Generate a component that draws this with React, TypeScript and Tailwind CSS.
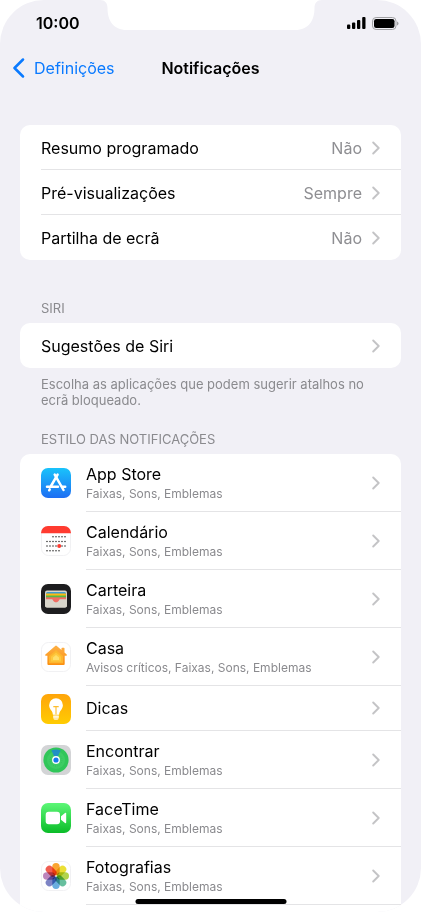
import React from 'react';

interface SettingItem {
  label: string;
  value?: string;
}

interface AppItem {
  name: string;
  styles?: string;
  icon: React.ReactNode;
}

const AppStoreIcon = () => (
  <svg viewBox="0 0 30 30" className="size-[30px]" aria-hidden="true">
    <defs>
      <linearGradient id="store" x1="0" y1="0" x2="0" y2="1">
        <stop offset="0" stopColor="#19C3FB" />
        <stop offset="1" stopColor="#1E6EF3" />
      </linearGradient>
    </defs>
    <rect width="30" height="30" rx="7" fill="url(#store)" />
    <g stroke="#fff" strokeWidth="2.5" strokeLinecap="round" fill="none">
      <path d="M16.6 6.6 10 18" />
      <path d="M13.700 6.600 22.500 22" />
      <path d="M6 18.800H17" />
      <path d="M21 18.800H24.200" />
      <path d="M8.700 21.400 8.200 22.300" />
    </g>
  </svg>
);

const calendarDots = [
  { y: 10.8, cols: [12, 15, 18, 21, 24] },
  { y: 15.5, cols: [6, 9, 12, 15, 18, 21, 24] },
  { y: 20, cols: [6, 9, 12, 15, 21, 24] },
  { y: 24.7, cols: [6, 9, 12, 15, 18] },
];

const CalendarIcon = () => (
  <svg viewBox="0 0 30 30" className="size-[30px]" aria-hidden="true">
    <rect x="0.5" y="0.5" width="29" height="29" rx="7" fill="#fff" stroke="#F1F1F3" />
    <path d="M0 7.2V7a7 7 0 0 1 7-7h16a7 7 0 0 1 7 7v.2Z" fill="#FF3B30" />
    {calendarDots.map((row) =>
      row.cols.map((x) => <circle key={`${x}-${row.y}`} cx={x} cy={row.y} r="0.7" fill="#111" />)
    )}
    <circle cx="18.2" cy="20" r="2" fill="#FF3B30" />
  </svg>
);

const WalletIcon = () => (
  <svg viewBox="0 0 30 30" className="size-[30px]" aria-hidden="true">
    <rect width="30" height="30" rx="7" fill="#1D1D1F" />
    <rect x="4" y="6.5" width="22" height="17" rx="2" fill="#D8D5CB" />
    <path d="M5 9.5A1.500 1.500 0 0 1 6.500 8h17A1.500 1.500 0 0 1 25 9.500V11H5Z" fill="#3D9BD0" />
    <path d="M5 9.500h20V12H5Z" fill="#FDB913" />
    <path d="M5 11.500h20V14H5Z" fill="#54B948" />
    <path d="M5 13.300h20v4H5Z" fill="#F16D63" />
    <path d="M12 15h6v1.500a3 3 0 0 1-6 0Z" fill="#F16D63" />
    <path d="M4 15.200h6.400c1 0 1.300.5 1.700 1.200.6 1.100 1.600 1.900 2.900 1.900s2.300-.8 2.900-1.900c.4-.7.7-1.200 1.700-1.200H26V21.500a2 2 0 0 1-2 2H6a2 2 0 0 1-2-2Z" fill="#D8D5CB" />
  </svg>
);

const HomeIcon = () => (
  <svg viewBox="0 0 30 30" className="size-[30px]" aria-hidden="true">
    <defs>
      <linearGradient id="home" x1="0" y1="0" x2="0" y2="1">
        <stop offset="0" stopColor="#FDB045" />
        <stop offset="1" stopColor="#FB8F10" />
      </linearGradient>
    </defs>
    <rect x="0.5" y="0.5" width="29" height="29" rx="7" fill="#fff" stroke="#F1F1F3" />
    <path d="M14.200 3.900a1.200 1.200 0 0 1 1.600 0l4.700 4V6.300q0-.6.600-.6h1.800q.6 0 .6.600v4.300l2.200 1.900c.5.500.2 1.200-.4 1.200h-1.600v8.200q0 1-1 1H7.400q-1 0-1-1v-8.200H4.800c-.7 0-1-.7-.4-1.200Z" fill="url(#home)" />
    <path d="m15 8 7 6v7.300H8V14Z" fill="#FDB62F" />
    <path d="m15 10.500 5 4.200v4.800H10v-4.800Z" fill="#FEC93F" />
    <path d="m15 13 3 2.500V18h-6v-2.500Z" fill="#FFDF6B" />
  </svg>
);

const TipsIcon = () => (
  <svg viewBox="0 0 30 30" className="size-[30px]" aria-hidden="true">
    <defs>
      <linearGradient id="tips" x1="0" y1="0" x2="0" y2="1">
        <stop offset="0" stopColor="#FFA50A" />
        <stop offset="1" stopColor="#FFCC02" />
      </linearGradient>
    </defs>
    <rect width="30" height="30" rx="7" fill="url(#tips)" />
    <path d="M15 4.300a6.900 6.900 0 0 0-6.900 6.900c0 2.700 1.500 4.200 2.600 5.900.8 1.200 1 2.300 1.200 3.600h6.200c.2-1.300.4-2.400 1.200-3.600 1.100-1.700 2.600-3.200 2.600-5.900A6.900 6.900 0 0 0 15 4.300Z" fill="#fff" />
    <path d="M12.200 21.200h5.600v1.700q0 3.200-2.800 3.200t-2.800-3.200Z" fill="#FFE9A8" />
    <path d="M12.200 22.900h5.600" stroke="#fff" strokeWidth="1" />
    <path d="M12.300 12.600h5.400M15 12.600v7.800" stroke="#FDBD2C" strokeWidth="1.100" fill="none" />
  </svg>
);

const FindMyIcon = () => (
  <svg viewBox="0 0 30 30" className="size-[30px]" aria-hidden="true">
    <rect width="30" height="30" rx="7" fill="#D3D4D6" />
    <circle cx="15" cy="15" r="12.600" fill="#30C659" />
    <circle cx="15" cy="15" r="9" fill="#3DCC64" />
    <circle cx="15" cy="15" r="6" fill="none" stroke="#2BB351" strokeWidth="0.700" strokeDasharray="0.700 1.600" />
    <path d="M15 15 10.400 5.500a11 11 0 0 1 9.200 0Z" fill="#1C86D6" opacity="0.850" />
    <circle cx="15" cy="15" r="3.900" fill="#fff" />
    <circle cx="15" cy="15" r="2.600" fill="#1478F0" />
  </svg>
);

const FaceTimeIcon = () => (
  <svg viewBox="0 0 30 30" className="size-[30px]" aria-hidden="true">
    <defs>
      <linearGradient id="facetime" x1="0" y1="0" x2="0" y2="1">
        <stop offset="0" stopColor="#5DF777" />
        <stop offset="1" stopColor="#0ABC28" />
      </linearGradient>
    </defs>
    <rect width="30" height="30" rx="7" fill="url(#facetime)" />
    <rect x="4.700" y="8.700" width="14.300" height="12.600" rx="3" fill="#fff" />
    <path d="M20 13.200 24 9.900c.5-.4 1.200-.1 1.200.6v9c0 .7-.7 1-1.200.6l-4-3.300Z" fill="#fff" />
  </svg>
);

const petals = ['#F99B1C', '#E9DC1F', '#A9CF38', '#57B894', '#5AA5DB', '#6F77BF', '#B678B5', '#EE4B3E'];

const PhotosIcon = () => (
  <svg viewBox="0 0 30 30" className="size-[30px]" aria-hidden="true">
    <rect x="0.5" y="0.5" width="29" height="29" rx="7" fill="#fff" stroke="#F1F1F3" />
    <g className="isolate">
      {petals.map((color, i) => (
        <rect
          key={color}
          x="11.300"
          y="2"
          width="7.400"
          height="12.200"
          rx="3.700"
          fill={color}
          fillOpacity="0.900"
          className="mix-blend-multiply"
          transform={`rotate(${i * 45} 15 15)`}
        />
      ))}
    </g>
  </svg>
);

const Chevron = () => (
  <svg viewBox="0 0 8 14" className="h-[14px] w-2 shrink-0" fill="none" aria-hidden="true">
    <path d="M1.200 1.500 6.700 7l-5.500 5.500" stroke="#C4C4C6" strokeWidth="1.900" strokeLinecap="round" strokeLinejoin="round" />
  </svg>
);

const generalSettings: SettingItem[] = [
  { label: 'Resumo programado', value: 'Não' },
  { label: 'Pré-visualizações', value: 'Sempre' },
  { label: 'Partilha de ecrã', value: 'Não' },
];

const siriSettings: SettingItem[] = [{ label: 'Sugestões de Siri' }];

const apps: AppItem[] = [
  { name: 'App Store', styles: 'Faixas, Sons, Emblemas', icon: <AppStoreIcon /> },
  { name: 'Calendário', styles: 'Faixas, Sons, Emblemas', icon: <CalendarIcon /> },
  { name: 'Carteira', styles: 'Faixas, Sons, Emblemas', icon: <WalletIcon /> },
  { name: 'Casa', styles: 'Avisos críticos, Faixas, Sons, Emblemas', icon: <HomeIcon /> },
  { name: 'Dicas', icon: <TipsIcon /> },
  { name: 'Encontrar', styles: 'Faixas, Sons, Emblemas', icon: <FindMyIcon /> },
  { name: 'FaceTime', styles: 'Faixas, Sons, Emblemas', icon: <FaceTimeIcon /> },
  { name: 'Fotografias', styles: 'Faixas, Sons, Emblemas', icon: <PhotosIcon /> },
];

const SettingsCard: React.FC<{ items: SettingItem[] }> = ({ items }) => (
  <ul className="mx-5 overflow-hidden rounded-[10px] bg-white pl-[21px]">
    {items.map((item) => (
      <li key={item.label} className="border-b border-[#E4E4E6] last:border-transparent">
        <button type="button" className="flex h-11 w-full items-center pt-0.5 pr-[21px] text-left text-base">
          <span className="flex-1">{item.label}</span>
          {item.value && <span className="mr-[10px] text-[#8E8E92]">{item.value}</span>}
          <Chevron />
        </button>
      </li>
    ))}
  </ul>
);

const StatusBar = () => (
  <div className="flex h-[46px] items-center justify-between pr-[22px] pl-9">
    <span className="text-base font-semibold">10:00</span>
    <div className="flex items-center gap-[6px]">
      <svg viewBox="0 0 19 12" className="h-3 w-[19px]" aria-hidden="true">
        <rect x="0" y="7.500" width="3.300" height="4.500" rx="1" />
        <rect x="5" y="5.500" width="3.300" height="6.500" rx="1" />
        <rect x="10" y="3" width="3.300" height="9" rx="1" />
        <rect x="15.200" y="0" width="3.300" height="12" rx="1" />
      </svg>
      <svg viewBox="0 0 27 13" className="h-[13px] w-[27px]" aria-hidden="true">
        <rect x="0.500" y="0.500" width="23.500" height="12" rx="3.600" fill="none" stroke="#A0A0A3" />
        <rect x="2" y="2" width="20.500" height="9" rx="2.200" />
        <path d="M25 4.500v4q1.500-.6 1.500-2t-1.500-2Z" fill="#A0A0A3" />
      </svg>
    </div>
  </div>
);

const App: React.FC = () => {
  return (
    <div className="bg-white">
      <div className="relative flex h-dvh flex-col overflow-hidden rounded-[44px] bg-[#F1F0F6] font-['Inter',sans-serif] text-black">
        <svg viewBox="0 0 222 30" className="absolute top-0 left-1/2 h-[30px] w-[222px] -translate-x-1/2" aria-hidden="true">
          <path d="M0 0C5 0 7.500 3 7.500 8 7.500 20 13 30 27 30H195C209 30 214.500 20 214.500 8 214.500 3 217 0 222 0Z" fill="#fff" />
        </svg>

        <StatusBar />

        <header className="grid h-[43px] grid-cols-[1fr_auto_1fr] items-center px-3">
          <a href="#definicoes" className="flex items-center gap-[9px] text-base text-[#0A7AFF]">
            <svg viewBox="0 0 13 20" className="h-5 w-[13px]" fill="none" aria-hidden="true">
              <path d="M11 1.500 2.500 10l8.500 8.500" stroke="currentColor" strokeWidth="2.500" strokeLinecap="round" strokeLinejoin="round" />
            </svg>
            Definições
          </a>
          <h1 className="text-base font-semibold">Notificações</h1>
        </header>

        <main className="flex min-h-0 flex-1 flex-col pt-9">
          <SettingsCard items={generalSettings} />

          <section className="pt-10">
            <h2 className="mx-[41px] mb-[6px] text-[13px] leading-[17px] text-[#8A8A8E]">SIRI</h2>
            <SettingsCard items={siriSettings} />
            <p className="mx-[41px] mt-2 text-[13px] leading-4 text-[#8A8A8E]">
              Escolha as aplicações que podem sugerir atalhos no ecrã bloqueado.
            </p>
          </section>

          <section className="flex min-h-0 flex-1 flex-col pt-[23px]">
            <h2 className="mx-[41px] mb-[6px] text-[13px] leading-[17px] text-[#8A8A8E]">ESTILO DAS NOTIFICAÇÕES</h2>
            <ul className="mx-5 min-h-0 flex-1 overflow-hidden rounded-t-[10px] bg-white">
              {apps.map((app) => (
                <li key={app.name}>
                  <button type="button" className="flex w-full items-center gap-[15px] pl-[21px] text-left">
                    {app.icon}
                    <span className={`flex flex-1 items-center border-b border-[#E4E4E6] pr-[21px] ${app.styles ? 'h-[58px]' : 'h-[45px]'}`}>
                      <span className="flex flex-1 flex-col">
                        <span className="text-base leading-[22px]">{app.name}</span>
                        {app.styles && <span className="text-xs leading-[18px] text-[#8A8A8E]">{app.styles}</span>}
                      </span>
                      <Chevron />
                    </span>
                  </button>
                </li>
              ))}
            </ul>
          </section>
        </main>

        <div className="absolute bottom-2 left-1/2 h-[5px] w-[151px] -translate-x-1/2 rounded-full bg-black" />
      </div>
    </div>
  );
};

export default App;
